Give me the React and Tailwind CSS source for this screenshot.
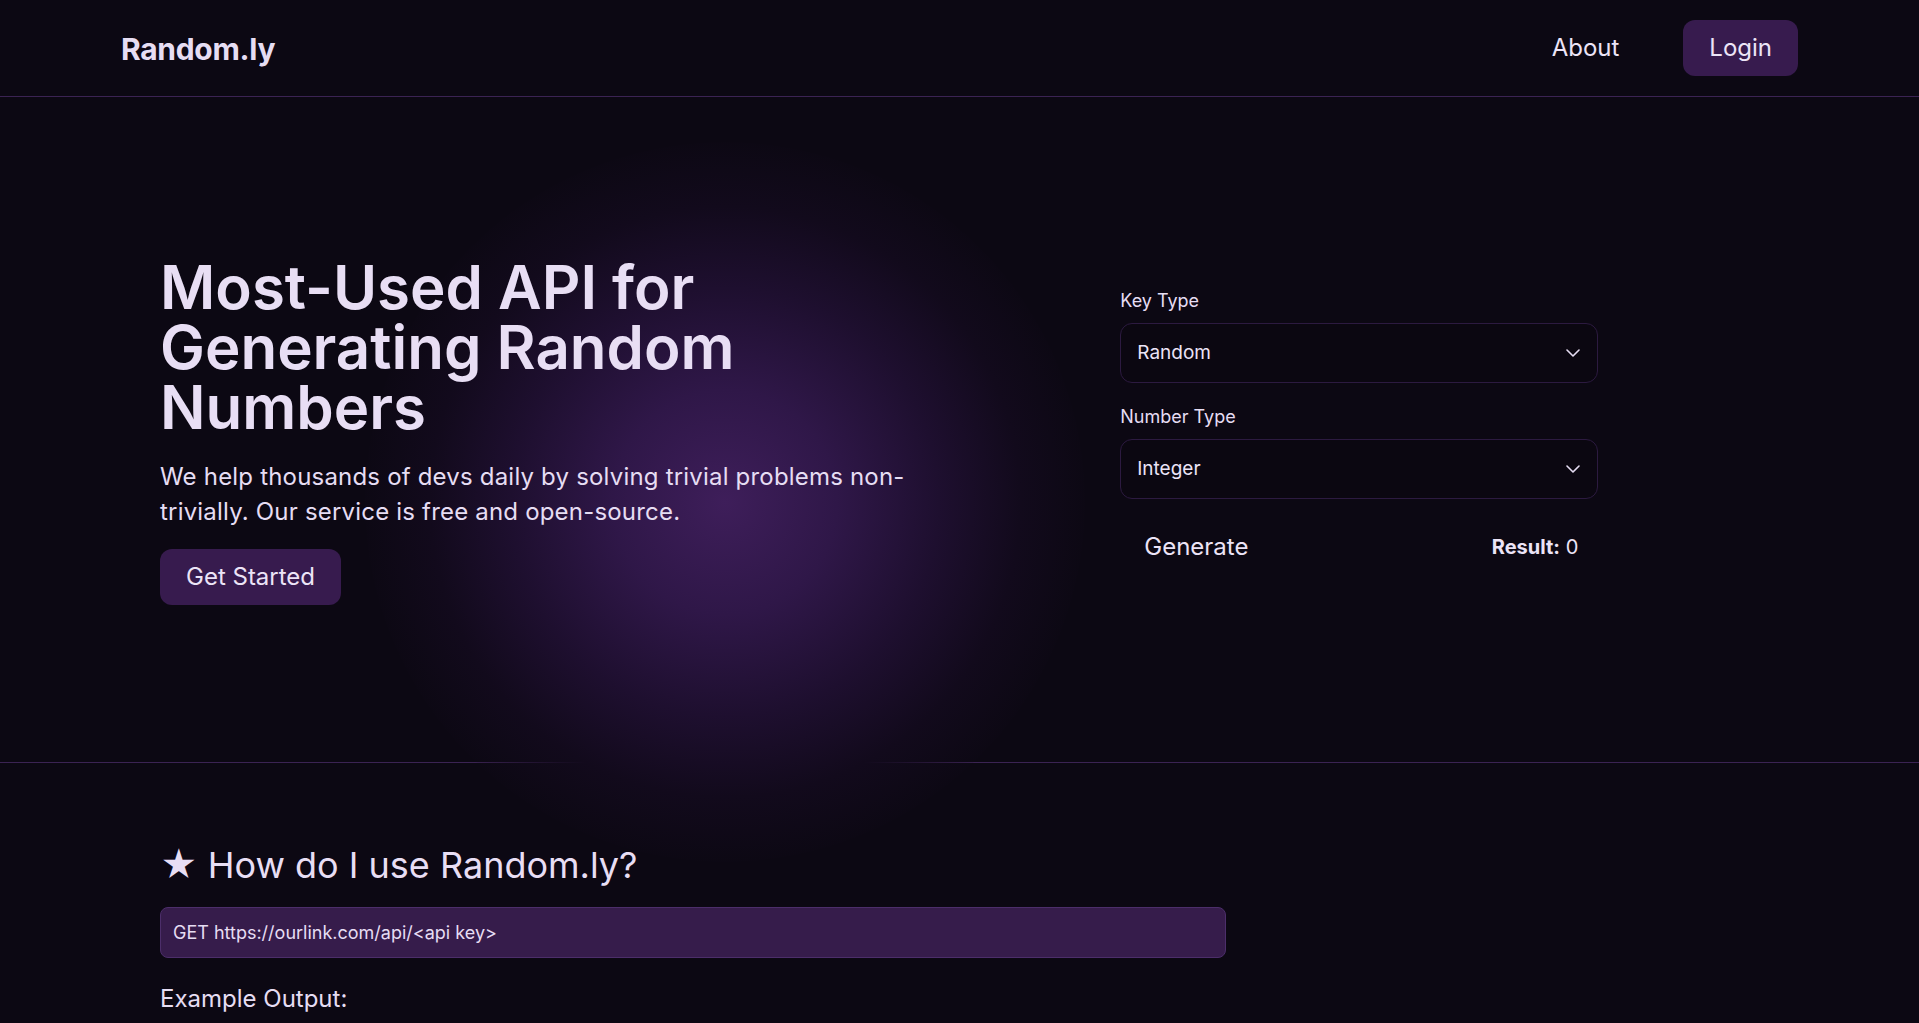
const font = { fontFamily: 'Inter, "Noto Sans", sans-serif' }

function Chevron() {
  return (
    <svg width="14" height="8" viewBox="0 0 14 8" fill="none" className="text-[#e6ddf3]">
      <path d="M1 1l6 6 6-6" stroke="currentColor" strokeWidth="1.6" strokeLinecap="round" strokeLinejoin="round" />
    </svg>
  )
}

function Field({ label, value }) {
  return (
    <div className="flex flex-col gap-2">
      <label className="text-lg leading-7 text-[#e6ddf3]">{label}</label>
      <div className="flex h-[60px] items-center justify-between rounded-xl border border-[#2c1a40] bg-[#0b0711] pl-4 pr-[17px] text-[19px] text-[#ece4f7]">
        <span>{value}</span>
        <Chevron />
      </div>
    </div>
  )
}

export default function App() {
  return (
    <div className="min-h-screen overflow-x-hidden bg-[#0c0813] text-[#e6ddf3]" style={font}>
      {/* Navbar */}
      <nav className="flex h-[97px] items-center justify-between border-b border-[#3b2353] px-[121px]">
        <a href="#" className="mt-px text-3xl font-bold tracking-[-0.01em] text-[#e6ddf3]">
          Random.ly
        </a>
        <div className="flex items-center gap-10">
          <a href="#" className="px-6 py-3 text-2xl text-[#ece4f7]">About</a>
          <button className="rounded-xl bg-[#371b4e] px-[26px] py-3 text-2xl text-[#ece4f7]">
            Login
          </button>
        </div>
      </nav>

      {/* Hero */}
      <section className="relative border-b border-[#3b2353]">
        <div className="pointer-events-none absolute left-[365px] top-[45px] h-[720px] w-[720px] rounded-full bg-[radial-gradient(circle,_#3e1e5a_0%,_#2f1748_22%,_#1e0f2f_42%,_#120a1c_58%,_transparent_72%)]" />
        <div className="relative grid grid-cols-2 items-center px-40 pt-[160px] pb-[157px]">
          <div className="flex flex-col items-start">
            <h1 className="text-6xl leading-none font-semibold text-[#e8def4]">
              Most-Used API for Generating Random Numbers
            </h1>
            <p className="mt-[22px] text-2xl leading-[35px] tracking-[0.008em] text-[#e6ddf3]">
              We help thousands of devs daily by solving trivial problems non-trivially. Our service is free and open-source.
            </p>
            <button className="mt-5 rounded-xl bg-[#371b4e] px-[26px] py-3 text-2xl text-[#ece4f7]">
              Get Started
            </button>
          </div>

          <div className="mx-auto flex w-[478px] flex-col gap-5">
            <Field label="Key Type" value="Random" />
            <Field label="Number Type" value="Integer" />
            <div className="flex items-center justify-between">
              <button className="px-6 py-3 text-2xl text-[#ece4f7]">Generate</button>
              <p className="pr-5 text-xl text-[#ece4f7]">
                <span className="font-bold">Result:</span> 0
              </p>
            </div>
          </div>
        </div>
      </section>

      {/* How to use */}
      <section className="relative px-40 pt-[82px] pb-40">
        <h2 className="text-4xl text-[#e8def4]">★ How do I use Random.ly?</h2>
        <div className="mt-[22px] flex h-[51px] w-2/3 items-center rounded-lg border border-[#4c2e6a] bg-[#361c4b] px-3 text-lg text-[#e6ddf3]">
          GET https://ourlink.com/api/&lt;api key&gt;
        </div>
        <h3 className="mt-[25px] text-2xl text-[#e6ddf3]">Example Output:</h3>
        <pre className="mt-4 w-2/3 rounded-lg border border-[#4c2e6a] bg-[#361c4b] px-3 py-3 text-lg text-[#e6ddf3]" style={font}>
{`{
  "key": "random",
  "type": "integer",
  "result": 4821
}`}
        </pre>
        <div className="h-[600px]" />
      </section>

      <footer className="border-t border-[#3b2353] px-[121px] py-10 text-lg text-[#bfb2d1]">
        © Random.ly — free and open-source.
      </footer>
    </div>
  )
}
